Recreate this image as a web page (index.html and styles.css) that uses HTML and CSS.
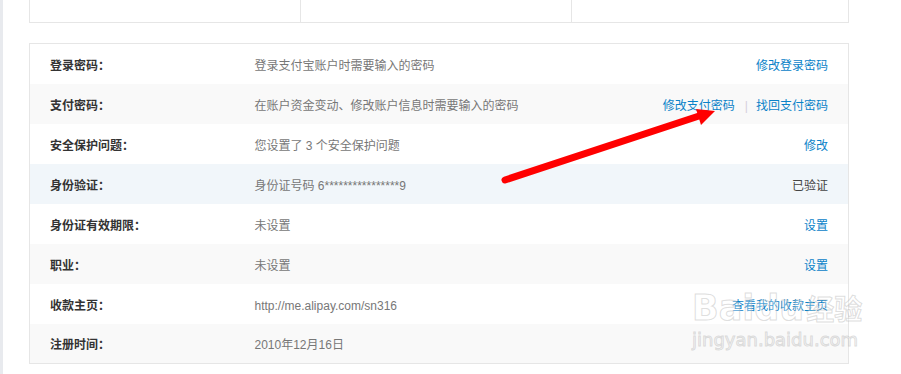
FILE: index.html
```html
<!DOCTYPE html>
<html lang="zh-CN">
<head>
    <meta charset="UTF-8">
    <meta name="viewport" content="width=device-width, initial-scale=1.0">
    <title>安全设置</title>
    <link rel="stylesheet" href="styles.css">
</head>
<body>
  <div class="page">
    <div class="side-strip"></div>
    <div class="content">
      <div class="summary">
        <div class="summary-cell"></div>
        <div class="summary-cell"></div>
        <div class="summary-cell last"></div>
      </div>

      <table class="info-table">
        <tbody>
          <tr>
            <th>登录密码：</th>
            <td class="desc">登录支付宝账户时需要输入的密码</td>
            <td class="action"><a href="#">修改登录密码</a></td>
          </tr>
          <tr class="alt">
            <th>支付密码：</th>
            <td class="desc">在账户资金变动、修改账户信息时需要输入的密码</td>
            <td class="action"><a href="#">修改支付密码</a><span class="sep">|</span><a href="#">找回支付密码</a></td>
          </tr>
          <tr>
            <th>安全保护问题：</th>
            <td class="desc">您设置了 3 个安全保护问题</td>
            <td class="action"><a href="#">修改</a></td>
          </tr>
          <tr class="hilite">
            <th>身份验证：</th>
            <td class="desc">身份证号码 6****************9</td>
            <td class="action done">已验证</td>
          </tr>
          <tr>
            <th>身份证有效期限：</th>
            <td class="desc">未设置</td>
            <td class="action"><a href="#">设置</a></td>
          </tr>
          <tr class="alt">
            <th>职业：</th>
            <td class="desc">未设置</td>
            <td class="action"><a href="#">设置</a></td>
          </tr>
          <tr>
            <th>收款主页：</th>
            <td class="desc">http://me.alipay.com/sn316</td>
            <td class="action"><a href="#">查看我的收款主页</a></td>
          </tr>
          <tr class="alt">
            <th>注册时间：</th>
            <td class="desc">2010年12月16日</td>
            <td class="action"></td>
          </tr>
        </tbody>
      </table>
    </div>
  </div>

  <!-- red arrow drawn over the screenshot -->
  <svg class="arrow" width="901" height="374" viewBox="0 0 901 374">
    <line x1="505" y1="180" x2="702" y2="115" stroke="#ff0000" stroke-width="7" stroke-linecap="round"/>
    <polygon points="715,111 696,109 701,125" fill="#ff0000"/>
  </svg>

  <div class="watermark">
    <div class="wm-logo">Baidu<span class="wm-cn">经验</span></div>
    <div class="wm-url">jingyan.baidu.com</div>
  </div>
</body>
</html>
```

FILE: styles.css
```css
body {
    margin: 0;
    font-family: "Liberation Sans", "Noto Sans CJK SC", sans-serif;
    font-size: 12px;
    color: #333;
    background: #fff;
}
.page {
    display: flex;
    min-height: 374px;
}
.side-strip {
    width: 3px;
    background-color: #e8eaee;
}
.content {
    width: 820px;
    padding-left: 26px;
}
.summary {
    display: flex;
    height: 22px;
    border: 1px solid #e6e6e6;
    border-top: none;
}
.summary-cell {
    width: 270px;
    border-right: 1px solid #e6e6e6;
}
.summary-cell.last {
    flex: 1;
    border-right: none;
}
.info-table {
    width: 100%;
    margin-top: 20px;
    border-collapse: collapse;
    border: 1px solid #e6e6e6;
}
.info-table th,
.info-table td {
    height: 40px;
    padding: 4px 0 0 0;
    box-sizing: border-box;
    vertical-align: middle;
    line-height: 16px;
}
.info-table th {
    width: 225px;
    padding-left: 20px;
    text-align: left;
    font-weight: bold;
    color: #333;
}
.info-table tr.alt {
    background-color: #f9f9f9;
}
.info-table tr.hilite {
    background-color: #f1f6fa;
}
.desc {
    color: #777;
}
.info-table .action {
    text-align: right;
    padding-right: 20px;
}
.action a {
    color: #0a82c8;
    text-decoration: none;
}
.action .sep {
    color: #d6d0dc;
    margin: 0 8px 0 10px;
}
.action.done {
    color: #444;
}
.arrow {
    position: absolute;
    top: 0;
    left: 0;
    pointer-events: none;
}
.watermark {
    position: absolute;
    left: 692px;
    top: 287px;
    color: rgba(255, 255, 255, 0.3);
    -webkit-text-stroke: 1px rgba(170, 170, 170, 0.4);
    pointer-events: none;
}
.wm-logo {
    font-family: "DejaVu Sans", sans-serif;
    font-size: 35px;
    font-weight: bold;
    line-height: 42px;
}
.wm-cn {
    font-family: "Noto Sans CJK SC", sans-serif;
    font-size: 28px;
    margin-left: 2px;
}
.wm-url {
    font-family: "DejaVu Sans", sans-serif;
    font-size: 18px;
    line-height: 22px;
}
```
